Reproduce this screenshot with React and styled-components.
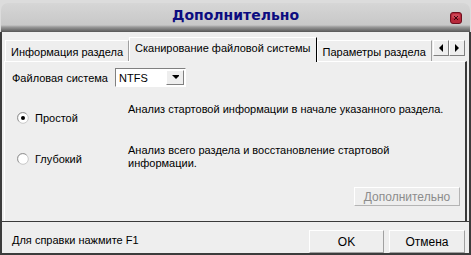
import React from 'react';
import styled, { createGlobalStyle } from 'styled-components';

const Global = createGlobalStyle`
  html, body { margin: 0; padding: 0; background: #dedede; }
  * { box-sizing: border-box; }
`;

const Window = styled.div`
  width: 471px;
  height: 255px;
  display: flex;
  flex-direction: column;
  padding-top: 3px;
  background: #dcdcdc;
  font-family: "Liberation Sans", Arial, sans-serif;
  font-size: 11px;
  color: #000;
`;

const TitleBar = styled.div`
  height: 29px;
  margin: 0 1px;
  border-radius: 7px 7px 0 0;
  background: linear-gradient(to bottom, #d6d6d6 0, #c8c8c8 22px, #9a9a9a 24px, #555 29px);
  display: flex;
  align-items: center;
  justify-content: center;
  position: relative;
  padding-bottom: 5px;
`;

const Title = styled.div`
  font-family: "DejaVu Sans", Verdana, sans-serif;
  font-weight: bold;
  font-size: 14px;
  color: #0c0c80;
`;

const CloseButton = styled.div`
  position: absolute;
  right: 8px;
  top: 9px;
  width: 12px;
  height: 12px;
`;

const Body = styled.div`
  flex: 1;
  display: flex;
  flex-direction: column;
  background: #eeeeee;
  border-left: 2px solid #3c3c3c;
  border-right: 2px solid #3c3c3c;
  border-bottom: 2px solid #3c3c3c;
`;

const TabStrip = styled.div`
  display: flex;
  align-items: flex-end;
  height: 29px;
  padding: 5px 0 0 3px;
  position: relative;
`;

const Tab = styled.div`
  height: ${(p) => (p.active ? '25px' : '21px')};
  padding: 0 5px;
  display: flex;
  align-items: center;
  padding-top: ${(p) => (p.active ? '0' : '1px')};
  padding-bottom: ${(p) => (p.active ? '4px' : '0')};
  border-top: 1px solid #fff;
  border-left: 1px solid #fff;
  border-right: 1px solid ${(p) => (p.active ? '#000' : '#a0a0a0')};
  background: #eeeeee;
  margin-bottom: ${(p) => (p.active ? '-1px' : '0')};
  white-space: nowrap;
  z-index: ${(p) => (p.active ? 1 : 0)};
`;

const ScrollButtons = styled.div`
  position: absolute;
  left: 431px;
  top: 8px;
  display: flex;
`;

const ScrollButton = styled.div`
  width: 16px;
  height: 16px;
  border-top: 1px solid #fff;
  border-left: 1px solid #fff;
  border-right: 1px solid #808080;
  border-bottom: 1px solid #808080;
  background: #eeeeee;
  display: flex;
  align-items: center;
  justify-content: center;
`;

const Page = styled.div`
  height: 160px;
  margin: 0 2px 0 2px;
  border-top: 1px solid #fff;
  border-left: 1px solid #fff;
  border-right: 2px solid #3a3a3a;
  padding: 6px 5px 0 7px;
  display: flex;
  flex-direction: column;
`;

const FsRow = styled.div`
  display: flex;
  align-items: center;
  gap: 7px;
`;

const Combo = styled.div`
  width: 71px;
  height: 19px;
  display: flex;
  align-items: center;
  border-top: 1px solid #808080;
  border-left: 1px solid #808080;
  border-right: 1px solid #fff;
  border-bottom: 1px solid #fff;
  background: #fff;
  padding: 1px;
`;

const ComboText = styled.div`
  flex: 1;
  padding-left: 2px;
`;

const ComboButton = styled.div`
  width: 18px;
  height: 15px;
  background: #eeeeee;
  border-top: 1px solid #fff;
  border-left: 1px solid #fff;
  border-right: 1px solid #808080;
  border-bottom: 1px solid #808080;
  display: flex;
  align-items: center;
  justify-content: center;
`;

const Options = styled.div`
  display: grid;
  grid-template-columns: 111px 1fr;
  grid-template-rows: 29px 29px;
  row-gap: 12px;
  margin-top: 16px;
  padding-left: 5px;
`;

const RadioLabel = styled.label`
  display: flex;
  align-items: center;
  gap: 6px;
  padding-top: 1px;
`;

const Description = styled.div`
  line-height: 13px;
`;

const ButtonRow = styled.div`
  display: flex;
  justify-content: flex-end;
  margin-top: 14px;
`;

const PushButton = styled.div`
  height: ${(p) => p.h || 19}px;
  width: ${(p) => p.w}px;
  display: flex;
  align-items: center;
  justify-content: center;
  color: ${(p) => (p.disabled ? '#8c8c8c' : '#000')};
  border-top: 1px solid #fff;
  border-left: 1px solid #fff;
  border-right: 1px solid ${(p) => (p.disabled ? '#b4b4b4' : '#a0a0a0')};
  border-bottom: 1px solid ${(p) => (p.disabled ? '#b4b4b4' : '#a0a0a0')};
  font-size: ${(p) => (p.big ? 12 : 11)}px;
`;

const Footer = styled.div`
  flex: 1;
  display: flex;
  align-items: flex-end;
  border-top: 1px solid #3a3a3a;
  padding: 0 4px 0 10px;
`;

const Hint = styled.div`
  flex: 1;
  align-self: center;
  padding-top: 5px;
`;

const FooterButtons = styled.div`
  display: flex;
  gap: 5px;
`;

function Radio({ checked }) {
  return (
    <svg width="12" height="12" viewBox="0 0 12 12">
      <circle cx="6" cy="6" r="5.3" fill="#fff" stroke="#c8c8c8" strokeWidth="1" />
      <path d="M2 9.5 A5 5 0 0 1 9.5 2" fill="none" stroke="#9a9a9a" strokeWidth="1" />
      {checked && <circle cx="6" cy="6" r="2" fill="#000" />}
    </svg>
  );
}

function Arrow({ dir }) {
  const d = dir === 'left' ? 'M6 1 L2 5 L6 9 Z' : dir === 'right' ? 'M2 1 L6 5 L2 9 Z' : 'M1 2 L9 2 L5 6 Z';
  return (
    <svg width="8" height="10" viewBox="0 0 8 10">
      <path d={d} fill="#000" />
    </svg>
  );
}

export default function App() {
  return (
    <Window>
      <Global />
      <TitleBar>
        <Title>Дополнительно</Title>
        <CloseButton>
          <svg width="12" height="12" viewBox="0 0 12 12">
            <rect x="0.5" y="0.5" width="11" height="11" rx="2.5" fill="#b8283a" stroke="#6e1020" />
            <rect x="2" y="2" width="8" height="4" rx="1.5" fill="#d85868" opacity="0.6" />
            <path d="M4 4 L8 8 M8 4 L4 8" stroke="#3a0810" strokeWidth="1" />
          </svg>
        </CloseButton>
      </TitleBar>
      <Body>
        <TabStrip>
          <Tab>Информация раздела</Tab>
          <Tab active>Сканирование файловой системы</Tab>
          <Tab>Параметры раздела</Tab>
          <ScrollButtons>
            <ScrollButton><Arrow dir="left" /></ScrollButton>
            <ScrollButton><Arrow dir="right" /></ScrollButton>
          </ScrollButtons>
        </TabStrip>
        <Page>
          <FsRow>
            <span>Файловая система</span>
            <Combo>
              <ComboText>NTFS</ComboText>
              <ComboButton><Arrow dir="down" /></ComboButton>
            </Combo>
          </FsRow>
          <Options>
            <RadioLabel><Radio checked />Простой</RadioLabel>
            <Description>Анализ стартовой информации в начале указанного раздела.</Description>
            <RadioLabel><Radio />Глубокий</RadioLabel>
            <Description>Анализ всего раздела и восстановление стартовой<br />информации.</Description>
          </Options>
          <ButtonRow>
            <PushButton w={106} disabled big>Дополнительно</PushButton>
          </ButtonRow>
        </Page>
        <Footer>
          <Hint>Для справки нажмите F1</Hint>
          <FooterButtons>
            <PushButton w={75} h={23} big>OK</PushButton>
            <PushButton w={76} h={23} big>Отмена</PushButton>
          </FooterButtons>
        </Footer>
      </Body>
    </Window>
  );
}
